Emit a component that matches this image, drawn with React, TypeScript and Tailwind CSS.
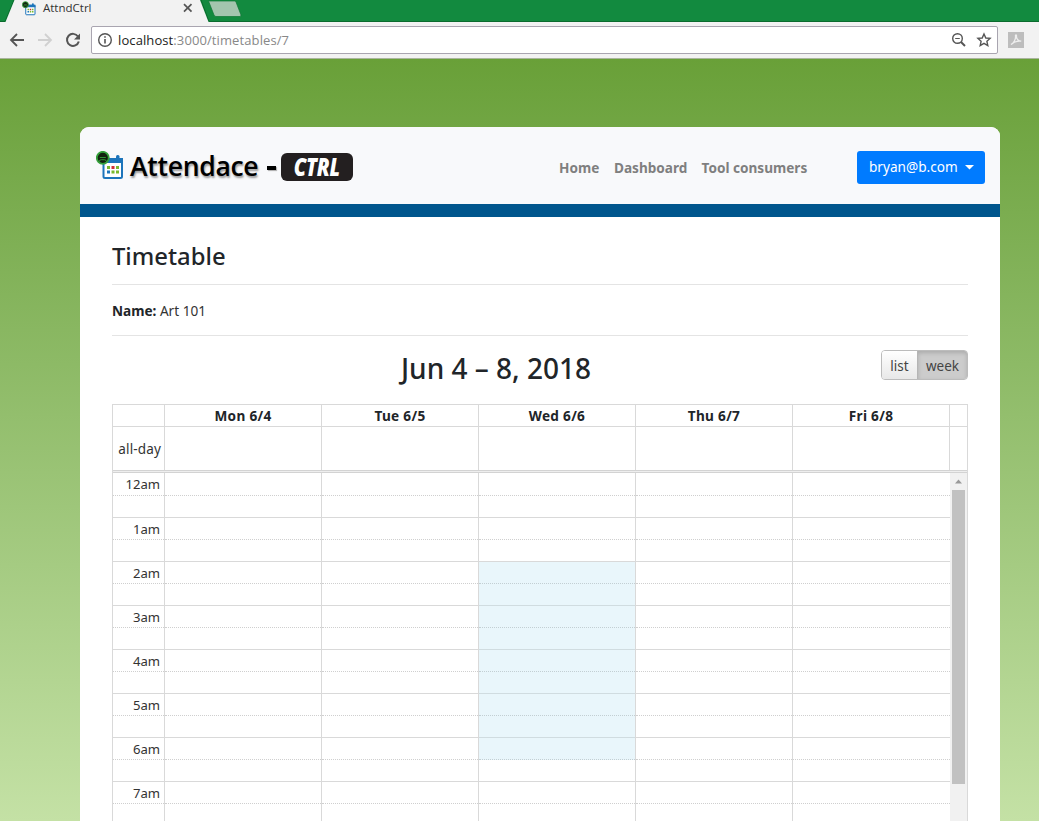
import React from "react";

const days = ["Mon 6/4", "Tue 6/5", "Wed 6/6", "Thu 6/7", "Fri 6/8"];
const hours = ["12am", "1am", "2am", "3am", "4am", "5am", "6am", "7am"];

function CalendarMark({ className }: { className: string }) {
  return (
    <svg className={className} viewBox="0 0 28 29">
      <rect x="7.5" y="8" width="18.5" height="19" rx="1.5" fill="#fff" stroke="#1d75bb" strokeWidth="2" />
      <path d="M7 7h20v5H7z" fill="#1d75bb" />
      <rect x="20" y="4" width="3.5" height="6" rx="1.5" fill="#1d75bb" />
      <path d="M11 15h3v3h-3zM20 15h3v3h-3zM15.500 19.500h3v3h-3zM20 19.500h3v3h-3z" fill="#7ab92f" />
      <path d="M15.500 15h3v3h-3z" fill="#cf2f37" />
      <path d="M11 19.500h3v3h-3z" fill="#1d75bb" />
      <circle cx="6.800" cy="6.800" r="6" fill="#12230f" stroke="#35a13b" strokeWidth="1.800" />
      <path d="M2.800 11q.5-2.300 2.500-2.300h3q2 0 2.500 2.300M3.800 6.500h6" fill="none" stroke="#35a13b" strokeWidth=".9" />
    </svg>
  );
}

function Browser() {
  return (
    <header className="h-[59px] shrink-0 border-b border-[#a9b59c] bg-[#f2f2f2] font-['Open_Sans',sans-serif]">
      <div className="relative h-[22px] bg-[#128a3f]">
        <svg className="absolute inset-0 h-[22px] w-full" viewBox="0 0 1039 22">
          <path d="M0 21.500h5L14 0M201 0l8 21.500h830" stroke="#0b6b2e" fill="none" />
          <path d="M5.500 22L14.500 0H200l8.500 22z" fill="#f2f2f2" />
          <path d="M208.500 1h26q1 0 1.500 1l5 13q0 1.500-1 1.500h-24q-1.500 0-2-1.500z" fill="#a3c5ae" stroke="#0d7634" strokeWidth=".7" />
          <path d="M184 4.200l7.500 7.500m0-7.500l-7.500 7.500" stroke="#555" strokeWidth="1.700" />
        </svg>
        <div className="relative flex h-4 items-center pl-[22px]">
          <CalendarMark className="h-[15px] w-[14px]" />
          <span className="ml-[7px] text-[11.5px] leading-4 text-[#333]">AttndCtrl</span>
        </div>
      </div>
      <div className="flex h-[36px] items-center">
        <svg className="h-[36px] w-[91px] shrink-0" viewBox="0 0 91 36" fill="none" strokeWidth="1.800">
          <path d="M24 18H11M17 12l-6 6 6 6" stroke="#555" />
          <path d="M38 18h13M45 12l6 6-6 6" stroke="#d0d0d0" />
          <path d="M78 14.500a6 6 0 1 0 .8 5" stroke="#555" strokeWidth="2" />
          <path d="M80 11.500v6h-6z" fill="#555" />
        </svg>
        <div className="flex h-[28px] w-[907px] items-center rounded-[2px] border border-[#a9a5b0] bg-white">
          <svg className="ml-[5px] size-4" viewBox="0 0 16 16" fill="none" stroke="#555" strokeWidth="1.400">
            <circle cx="8" cy="8" r="6.300" />
            <path d="M8 7v4.500M8 4.200v1.600" strokeWidth="1.600" />
          </svg>
          <span className="ml-[5px] pt-[2px] text-[13px] tracking-[0.1px] text-[#888]"><span className="text-[#222]">localhost</span>:3000/timetables/7</span>
          <svg className="ml-auto h-4 w-[46px]" viewBox="0 0 46 16" fill="none" stroke="#555" strokeWidth="1.400">
            <circle cx="6.500" cy="6.500" r="4.800" />
            <path d="M10 10l4 4" strokeWidth="2" />
            <path d="M4.200 6.500h4.600" strokeWidth="1" />
            <path d="M33 2l1.800 4 4.300.4-3.200 2.900.9 4.300-3.800-2.300-3.800 2.300.9-4.300-3.200-2.900 4.300-.4z" />
          </svg>
        </div>
        <svg className="ml-[10px] size-4" viewBox="0 0 16 16">
          <path d="M0 0h16v16H0z" fill="#bdbdbd" />
          <path d="M3 12.500c2.500-1 5-5.500 4.500-8.500-.2-1.500 1.200-1.500 1 .2-.3 2.500 2 5 4.700 5-2.700-.5-6.700.3-10.200 3.300" fill="none" stroke="#eee" strokeWidth="1.300" />
        </svg>
      </div>
    </header>
  );
}

function Navbar() {
  return (
    <nav className="flex h-[90px] items-start rounded-t-[9px] border-b-[13px] border-[#00568d] bg-[#f8f9fb]">
      <div className="flex h-[77px] w-[479px] items-center pl-4">
        <CalendarMark className="h-[29px] w-[28px]" />
        <span className="ml-[6px] w-[137px] whitespace-nowrap font-['Open_Sans',sans-serif] text-[26.5px] font-semibold leading-8 tracking-[-0.28px] text-black [text-shadow:1px_2px_2px_#999]">Attendace</span>
        <span className="mt-[5px] h-[3.5px] w-[9px] bg-black shadow-[1px_1px_1px_#aaa]" />
        <span className="ml-[5px] mt-[3px] flex h-[28px] w-[72px] items-center justify-center rounded-[6px] bg-[#231f20] text-white">
          <span className="inline-block scale-x-[.83] font-['Open_Sans',sans-serif] text-[24px] font-extrabold italic leading-7 tracking-[-0.3px]">CTRL</span>
        </span>
      </div>
      <div className="flex h-[82px] items-center text-[13.600px] font-bold text-[#7f7f7f]">
        <span className="w-[55px]">Home</span>
        <span className="w-[87.500px]">Dashboard</span>
        <span className="whitespace-nowrap">Tool consumers</span>
      </div>
      <button className="ml-auto mr-[15px] mt-[24px] flex h-[33px] w-[128px] items-center rounded-[3px] bg-[#007bff] pl-3 text-[13.600px] text-white">
        <span className="w-[96px] text-left">bryan@b.com</span>
        <svg className="h-[5px] w-[9px]" viewBox="0 0 9 5"><path d="M0 0h9L4.500 4.500z" fill="white" /></svg>
      </button>
    </nav>
  );
}

function slotClass(row: number, open: boolean) {
  if (row === 0) return "h-[23px] border-b border-dotted border-[#cfcfcf]";
  return open
    ? "h-[22px] border-b border-dotted border-[#c3cfd3] bg-[#e9f6fb]"
    : "h-[22px] border-b border-dotted border-[#cfcfcf]";
}

function WeekGrid() {
  return (
    <div className="h-[417px] border border-b-0 border-[#d9d9d9] text-[13.500px]">
      <div className="flex h-[22px] border-b border-[#d9d9d9] text-[13.600px] font-bold leading-[22px] tracking-[0.3px]">
        <div className="w-[52px] border-r border-[#d9d9d9]" />
        {days.map((day) => (
          <div key={day} className="w-[157px] border-r border-[#d9d9d9] text-center">{day}</div>
        ))}
      </div>
      <div className="flex h-[43px]">
        <div className="flex w-[52px] items-center justify-end border-r border-[#d9d9d9] pr-[3px] pt-px tracking-[0.15px] text-[#333]">all-day</div>
        {days.map((day) => (
          <div key={day} className="w-[157px] border-r border-[#d9d9d9]" />
        ))}
      </div>
      <div className="h-[3px] border-y border-[#d3d3d3] bg-[#eeeeee]" />
      <div className="flex h-[348px] overflow-hidden">
        <div className="w-[52px] border-r border-[#d9d9d9] text-right text-[13.100px] leading-[22px] text-[#333]">
          {hours.map((hour, row) => (
            <div key={hour}>
              <div className={`${slotClass(row, false)} pr-[4px]`}>{hour}</div>
              <div className="h-[22px] border-b border-[#d9d9d9]" />
            </div>
          ))}
        </div>
        {days.map((day, index) => (
          <div key={day} className={index === 4 ? "w-[157px]" : "w-[157px] border-r border-[#d9d9d9]"}>
            {hours.map((hour, row) => {
              const open = index === 2 && row >= 2 && row <= 6;
              return (
                <div key={hour}>
                  <div className={slotClass(row, open)} />
                  <div className={open && row < 6 ? "h-[22px] border-b border-[#d0dce0] bg-[#e9f6fb]" : "h-[22px] border-b border-[#d9d9d9]"} />
                </div>
              );
            })}
          </div>
        ))}
        <div className="w-[17px] bg-[#f1f1f1]">
          <svg className="h-[17px] w-[17px]" viewBox="0 0 17 17"><path d="M5 10.500l3.500-4 3.500 4z" fill="#999" /></svg>
          <div className="ml-[2px] h-[294px] w-[13px] bg-[#c1c1c1]" />
        </div>
      </div>
    </div>
  );
}

export default function App() {
  return (
    <div className="flex h-[821px] w-[1039px] flex-col overflow-hidden bg-[#f2f2f2] font-['Noto_Sans',sans-serif] text-[#212529]">
      <Browser />
      <div className="flex-1 bg-linear-to-b from-[#69a038] to-[#c4e1a5] pl-[80px] pt-[68px]">
        <section className="h-[694px] w-[920px] rounded-t-[9px] bg-white">
          <Navbar />
          <main className="px-8">
            <h1 className="h-[68px] border-b border-[#e4e4e4] pt-[20px] text-[23.800px] font-medium leading-[38px]">Timetable</h1>
            <p className="h-[51px] border-b border-[#e4e4e4] text-[13.600px] leading-[52px] text-[#333]"><b className="text-[#212529]">Name:</b> Art 101</p>
            <div className="relative flex h-[68px] justify-end pt-[14px]">
              <h2 className="absolute left-[289px] top-[13px] whitespace-nowrap text-[28px] font-medium leading-[38px]">Jun 4 – 8, 2018</h2>
              <div className="flex h-[30px] w-[87px] overflow-hidden rounded-[4px] border border-[#bcbcbc] text-[13.500px] text-[#444]">
                <span className="flex w-[35px] items-center justify-center bg-linear-to-b from-white to-[#e8e8e8] pt-[2px]">list</span>
                <span className="flex flex-1 items-center justify-center border-l border-[#b5b5b5] bg-[#cccccc] pt-[2px] shadow-[inset_0_2px_4px_#aaaaaa]">week</span>
              </div>
            </div>
            <WeekGrid />
          </main>
        </section>
      </div>
    </div>
  );
}
